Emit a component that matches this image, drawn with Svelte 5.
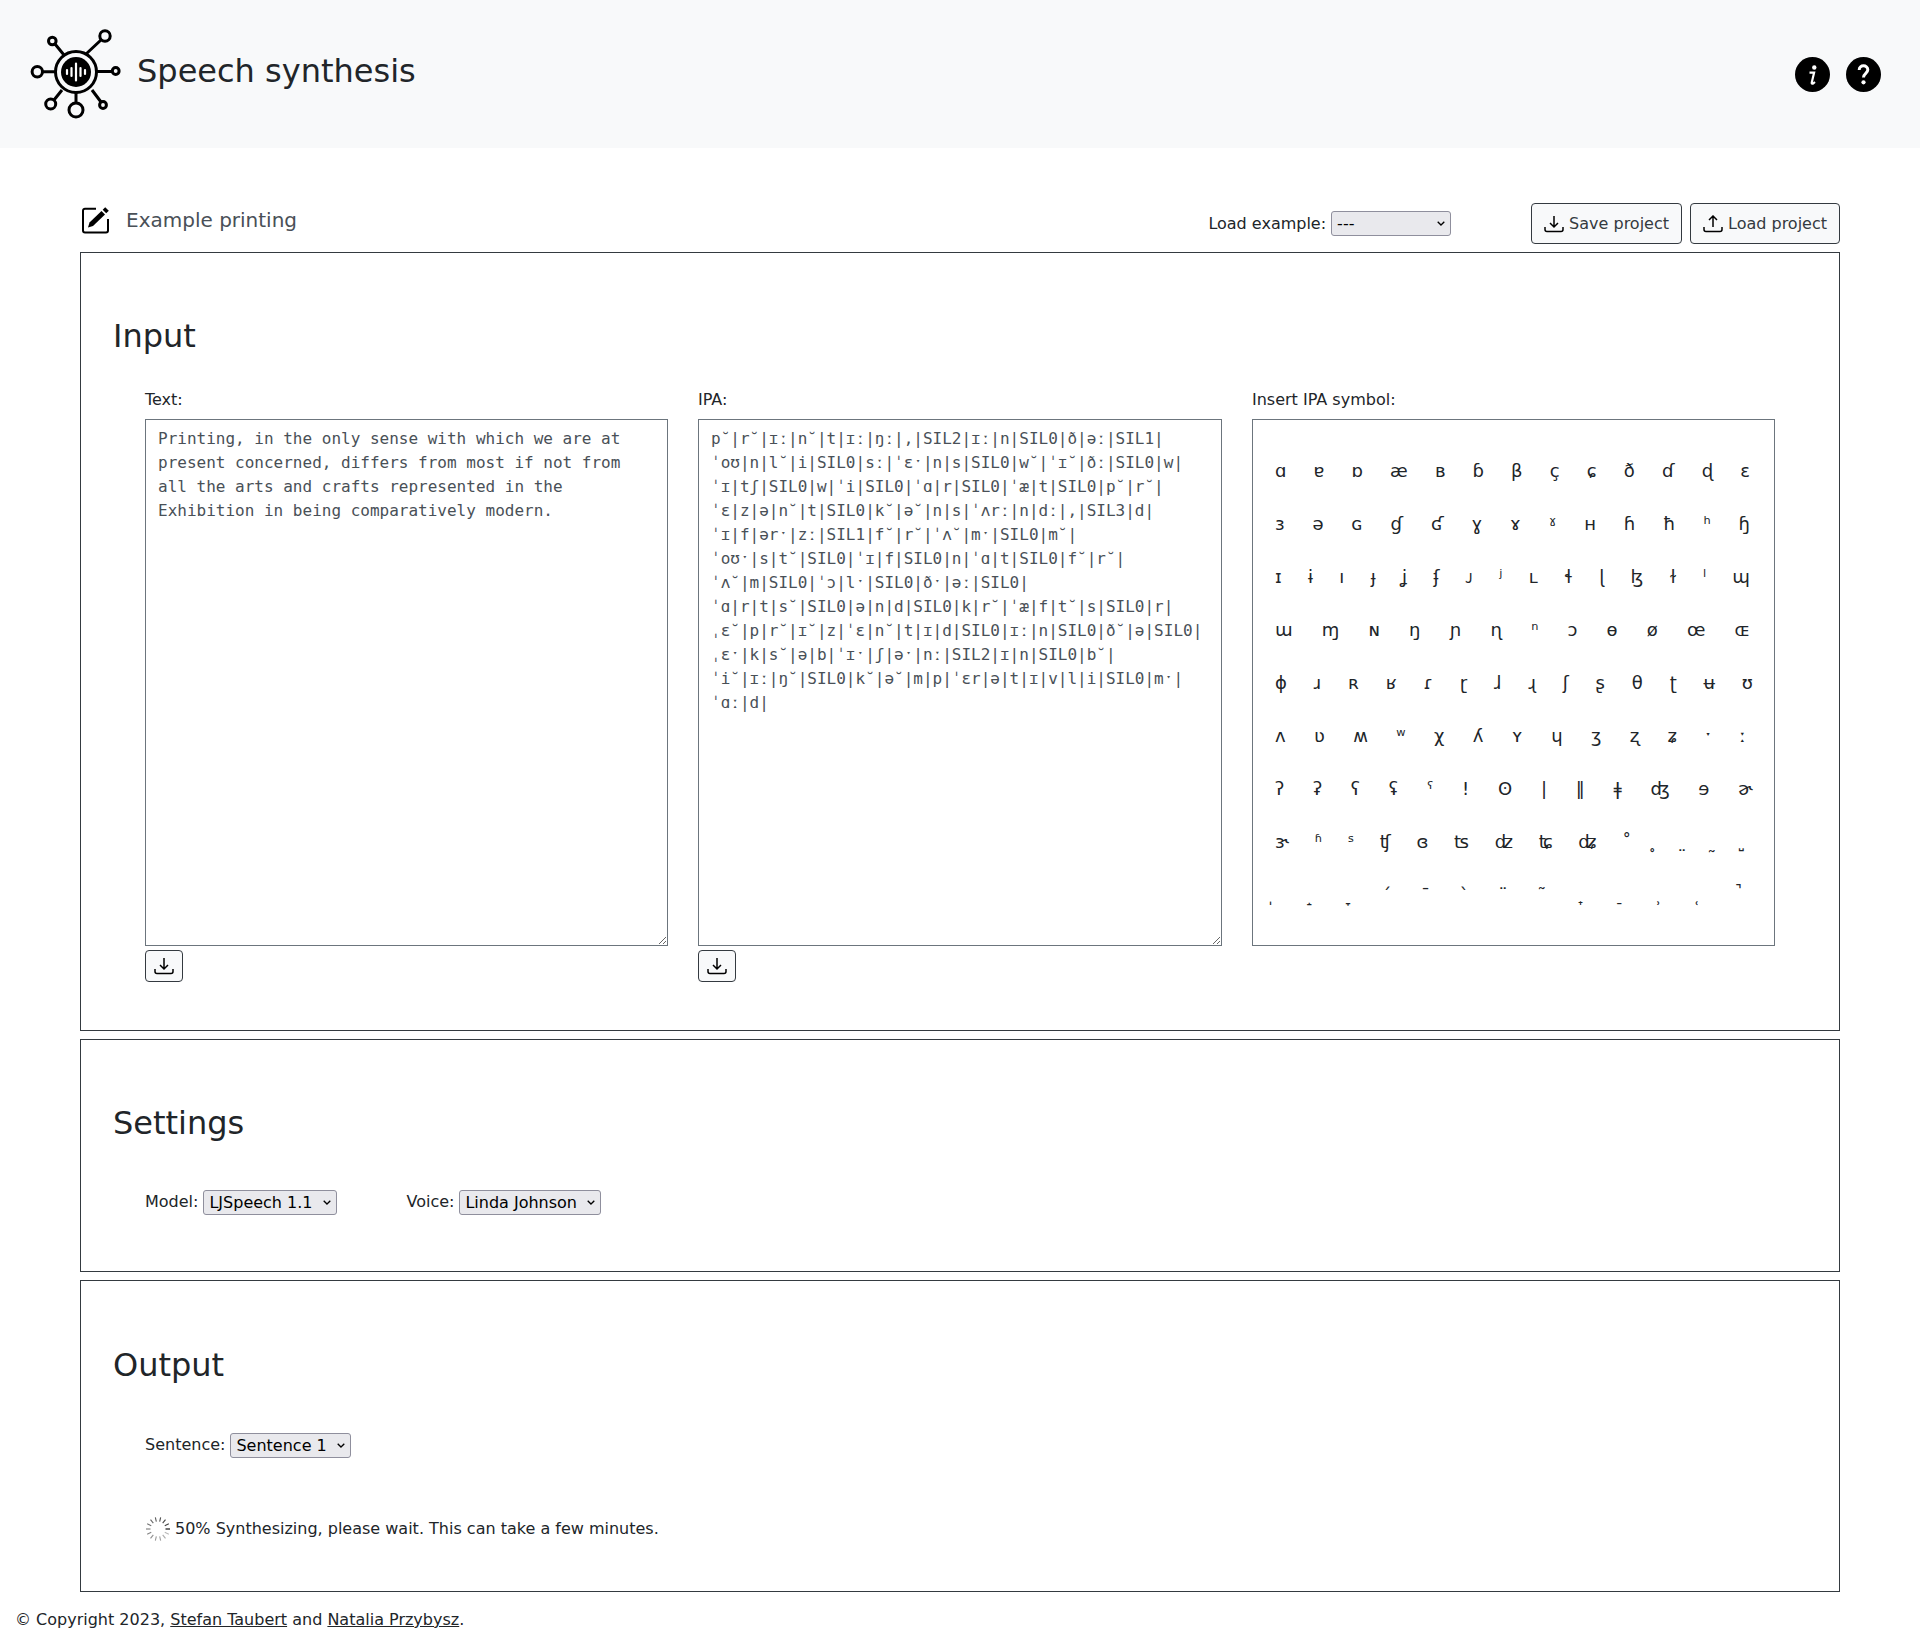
<script>
  const rows = [
    ["ɑ","ɐ","ɒ","æ","ʙ","ɓ","β","ç","ɕ","ð","ɗ","ɖ","ɛ"],
    ["ɜ","ə","ɢ","ɠ","ʛ","ɣ","ɤ","ˠ","ʜ","ɦ","ħ","ʰ","ɧ"],
    ["ɪ","ɨ","ı","ɟ","ʝ","ʄ","ᴊ","ʲ","ʟ","ɬ","ɭ","ɮ","ɫ","ˡ","ɰ"],
    ["ɯ","ɱ","ɴ","ŋ","ɲ","ɳ","ⁿ","ɔ","ɵ","ø","œ","ɶ"],
    ["ɸ","ɹ","ʀ","ʁ","ɾ","ɽ","ɺ","ɻ","ʃ","ʂ","θ","ʈ","ʉ","ʊ"],
    ["ʌ","ʋ","ʍ","ʷ","χ","ʎ","ʏ","ɥ","ʒ","ʐ","ʑ","ˑ","ː"],
    ["ʔ","ʡ","ʕ","ʢ","ˤ","!","ʘ","|","‖","ǂ","ʤ","ɘ","ɚ"],
    ["ɝ","ʱ","ˢ","ʧ","ɞ","ʦ","ʣ","ʨ","ʥ","˚","\u0325","\u0324","\u0330","\u033a"],
    ["\u0329","\u031d","\u031e","\u0301","\u0304","\u0300","\u0308","\u0303","\u031f","\u0320","\u0339","\u031c","\u031a"]
  ];
  const text = "Printing, in the only sense with which we are at present concerned, differs from most if not from all the arts and crafts represented in the Exhibition in being comparatively modern.";
  const ipa = [
    "p˘|r˘|ɪː|n˘|t|ɪː|ŋː|,|SIL2|ɪː|n|SIL0|ð|əː|SIL1|",
    "ˈoʊ|n|l˘|i|SIL0|sː|ˈɛˑ|n|s|SIL0|w˘|ˈɪ˘|ðː|SIL0|w|",
    "ˈɪ|tʃ|SIL0|w|ˈi|SIL0|ˈɑ|r|SIL0|ˈæ|t|SIL0|p˘|r˘|",
    "ˈɛ|z|ə|n˘|t|SIL0|k˘|ə˘|n|s|ˈʌrː|n|dː|,|SIL3|d|",
    "ˈɪ|f|ərˑ|zː|SIL1|f˘|r˘|ˈʌ˘|mˑ|SIL0|m˘|",
    "ˈoʊˑ|s|t˘|SIL0|ˈɪ|f|SIL0|n|ˈɑ|t|SIL0|f˘|r˘|",
    "ˈʌ˘|m|SIL0|ˈɔ|lˑ|SIL0|ðˑ|əː|SIL0|",
    "ˈɑ|r|t|s˘|SIL0|ə|n|d|SIL0|k|r˘|ˈæ|f|t˘|s|SIL0|r|",
    "ˌɛ˘|p|r˘|ɪ˘|z|ˈɛ|n˘|t|ɪ|d|SIL0|ɪː|n|SIL0|ð˘|ə|SIL0|",
    "ˌɛˑ|k|s˘|ə|b|ˈɪˑ|ʃ|əˑ|nː|SIL2|ɪ|n|SIL0|b˘|",
    "ˈi˘|ɪː|ŋ˘|SIL0|k˘|ə˘|m|p|ˈɛr|ə|t|ɪ|v|l|i|SIL0|mˑ|",
    "ˈɑː|d|"
  ].join("\n");
  const ticks = Array.from({ length: 14 }, (_, i) => i);
  const isMark = (s) => /^[\u0300-\u036f]$/.test(s);
</script>

{#snippet down()}
  <svg class="tray" viewBox="0 0 20 18" aria-hidden="true">
    <path d="M10 1v11M6 8l4 4 4-4M1 12v2.500a2 2 0 0 0 2 2h14a2 2 0 0 0 2-2V12" />
  </svg>
{/snippet}
{#snippet up()}
  <svg class="tray" viewBox="0 0 20 18" aria-hidden="true">
    <path d="M10 12V1M6 5l4-4 4 4M1 12v2.500a2 2 0 0 0 2 2h14a2 2 0 0 0 2-2V12" />
  </svg>
{/snippet}
{#snippet pick(label, cls = "")}
  <span class="pick">
    <select class={cls}><option>{label}</option></select>
    <svg class="chev" viewBox="0 0 8 5" aria-hidden="true"><path d="M.7.7 4 4 7.300.7" /></svg>
  </span>
{/snippet}

<header>
  <div class="brand">
    <svg class="logo" viewBox="0 0 94 94" aria-hidden="true">
      <g fill="none" stroke="#000" stroke-width="3">
        <circle cx="46" cy="46" r="20.500" />
        <circle cx="75" cy="10" r="5.200" />
        <circle cx="22.300" cy="15" r="3.800" />
        <circle cx="7.300" cy="45.700" r="5.200" />
        <circle cx="85.700" cy="45" r="3.400" />
        <circle cx="73" cy="79" r="3.400" />
        <circle cx="20.700" cy="78" r="5" />
        <circle cx="46" cy="84" r="7" />
        <path d="M56 28 71 14M25 18 34 29M12.500 45.700H25.500M67 45.500H82M62 64 71 76M32 64 24 74M46 66.500V77" />
      </g>
      <circle cx="46" cy="46" r="15" fill="#000" />
      <g stroke="#fff" stroke-width="2.200" stroke-linecap="round">
        <path d="M37 44v4M41.500 42v8M46 37.500v17M50.500 42v8M55 44v4" />
      </g>
    </svg>
    <h1>Speech synthesis</h1>
  </div>
  <div class="help">
    <svg class="round" viewBox="0 0 35 35" aria-hidden="true">
      <circle cx="17.500" cy="17.500" r="17.500" fill="#000" />
      <circle cx="19.300" cy="10.500" r="2.200" fill="#fff" />
      <path d="M14.500 15.700h4.600l-2.400 10c-.2 1 .9 1.100 1.600.6l1.700-1.300" fill="none" stroke="#fff" stroke-width="2.200" />
    </svg>
    <svg class="round" viewBox="0 0 35 35" aria-hidden="true">
      <circle cx="17.500" cy="17.500" r="17.500" fill="#000" />
      <path d="M13.200 13c0-5.500 8.600-5.500 8.600-.2 0 3.500-4.300 3.600-4.300 7.700" fill="none" stroke="#fff" stroke-width="3" />
      <circle cx="17.500" cy="25.300" r="2.100" fill="#fff" />
    </svg>
  </div>
</header>

<main>
  <div class="toolbar">
    <svg class="edit" viewBox="0 0 29 28" aria-hidden="true">
      <path d="M15 2.700H4a2 2 0 0 0-2 2V24.500a2 2 0 0 0 2 2H25a2 2 0 0 0 2-2V13" fill="none" stroke="#000" stroke-width="2" />
      <path d="M7 21.500 8.500 16.500 20.500 5 24 8.500 12 20Z" fill="#000" />
      <path d="M21.700 3.800 24.200 1.200 27.800 4.800 25.200 7.300Z" fill="#000" />
    </svg>
    <span class="doc">Example printing</span>
    <label class="field example">Load example: {@render pick("---", "wide")}</label>
    <button class="tool save">{@render down()}Save project</button>
    <button class="tool">{@render up()}Load project</button>
  </div>

  <section class="input">
    <h2>Input</h2>
    <div class="cols">
      <div>
        <div class="lab">Text:</div>
        <textarea readonly value={text}></textarea>
        <button class="mini" aria-label="Download text">{@render down()}</button>
      </div>
      <div>
        <div class="lab">IPA:</div>
        <textarea readonly value={ipa}></textarea>
        <button class="mini" aria-label="Download IPA">{@render down()}</button>
      </div>
      <div>
        <div class="lab">Insert IPA symbol:</div>
        <div class="symbols">
          {#each rows as row, r}
            <div class="symrow" class:last={r === 8}>
              {#each row as s}<span class:mark={r === 7 && isMark(s)}>{s}</span>{/each}
            </div>
          {/each}
        </div>
      </div>
    </div>
  </section>

  <section class="settings">
    <h2>Settings</h2>
    <div class="fields">
      <label class="field">Model: {@render pick("LJSpeech 1.1")}</label>
      <label class="field">Voice: {@render pick("Linda Johnson")}</label>
    </div>
  </section>

  <section class="output">
    <h2>Output</h2>
    <div class="fields">
      <label class="field">Sentence: {@render pick("Sentence 1")}</label>
    </div>
    <div class="progress">
      <svg class="spin" viewBox="-13 -13 26 26" aria-hidden="true">
        {#each ticks as t}
          <line x1="7.500" y1="0" x2="12" y2="0" transform={`rotate(${t * (360 / 14)})`} stroke="#000" stroke-width="1.100" stroke-opacity={t === 0 ? 1 : 0.25 + (t / 14) * 0.55} />
        {/each}
      </svg>
      <span>50% Synthesizing, please wait. This can take a few minutes.</span>
    </div>
  </section>
</main>

<footer>© Copyright 2023, <a href="#s">Stefan Taubert</a> and <a href="#n">Natalia Przybysz</a>.</footer>

<style>
  :global(body) {
    margin: 0;
    font-family: "DejaVu Sans", sans-serif;
    font-size: 16px;
    line-height: 1.5;
    color: #212529;
    background: #fff;
  }
  header {
    height: 148px;
    background: #f8f9fa;
    display: flex;
    align-items: center;
    justify-content: space-between;
    padding: 0 39px 0 30px;
  }
  .brand { display: flex; align-items: center; gap: 15px; }
  .logo { width: 94px; height: 94px; flex: none; margin-bottom: 2px; margin-right: -2px; }
  h1 { font-size: 32px; font-weight: 400; line-height: 1.2; margin: -6px 0 0; }
  .help { display: flex; gap: 16px; }
  .round { width: 35px; height: 35px; display: block; }
  main { padding: 55px 80px 0; }
  .toolbar { display: flex; align-items: center; height: 41px; margin-bottom: 8px; }
  .edit { width: 29px; height: 28px; margin-left: 1px; flex: none; margin-bottom: 8px; }
  .doc { font-size: 20px; color: #495057; margin-left: 16px; margin-bottom: 7px; }
  .example { margin-left: auto; margin-right: 80px; }
  .field { display: inline-flex; align-items: center; gap: 5px; }
  .pick { position: relative; display: inline-flex; }
  select {
    appearance: none;
    height: 25px;
    box-sizing: border-box;
    padding: 0 23px 0 5px;
    border: 1px solid #8f8f9d;
    border-radius: 3px;
    background: #e9e9ed;
    color: #000;
    font: 16px "DejaVu Sans", sans-serif;
  }
  .wide { width: 120px; }
  .chev { position: absolute; right: 6px; top: 10px; width: 8px; height: 5px; pointer-events: none; }
  .chev path { fill: none; stroke: #000; stroke-width: 1.300; }
  .tool {
    display: flex;
    align-items: center;
    gap: 5px;
    height: 41px;
    padding: 0 12px;
    box-sizing: border-box;
    font: 16px/1.5 "DejaVu Sans", sans-serif;
    color: #343a40;
    background: #f8f9fa;
    border: 1px solid #343a40;
    border-radius: 4px;
  }
  .save { margin-right: 8px; }
  .tray { width: 20px; height: 18px; display: block; flex: none; }
  .tray path { fill: none; stroke: #000; stroke-width: 1.500; }
  section {
    border: 1px solid #343a40;
    padding: 64px 32px 0;
    margin-bottom: 8px;
    box-sizing: border-box;
  }
  h2 { font-size: 32px; font-weight: 400; line-height: 1.2; margin: 0 0 33px; }
  .input { height: 779px; }
  .settings { height: 233px; }
  .output { height: 312px; padding-top: 65px; }
  .cols {
    display: grid;
    grid-template-columns: 523px 524px 523px;
    gap: 30px;
    margin-left: 32px;
  }
  .lab { line-height: 24px; margin-bottom: 6.600px; }
  textarea {
    display: block;
    width: 100%;
    height: 527px;
    box-sizing: border-box;
    padding: 7px 12px;
    border: 1px solid #6c757d;
    border-radius: 0;
    font: 16px/24px "DejaVu Sans Mono", monospace;
    color: #495057;
    outline: none;
  }
  .mini {
    display: flex;
    align-items: center;
    justify-content: center;
    width: 38px;
    height: 32px;
    margin-top: 4px;
    padding: 0;
    background: #f8f9fa;
    border: 1px solid #343a40;
    border-radius: 4px;
  }
  .symbols {
    height: 527px;
    box-sizing: border-box;
    border: 1px solid #6c757d;
    padding: 24px 24px 0 22px;
    overflow: hidden;
    font-size: 18px;
  }
  .symrow {
    display: flex;
    justify-content: space-between;
    height: 53px;
    align-items: center;
  }
  .symrow span { min-width: 1px; }
  .symrow .mark { min-width: 4px; }
  .symrow:nth-child(5) { margin-right: -3px; }
  .symrow:nth-child(6) { padding-right: 4px; }
  .symrow:nth-child(7) { margin-right: -3px; }
  .last { padding-right: 9px; }
  .fields { display: flex; gap: 69px; margin-left: 32px; }
  .settings h2 { margin-bottom: 47.600px; }
  .output h2 { margin-bottom: 48.600px; }
  .progress { display: flex; align-items: center; gap: 4px; margin: 58px 0 0 32px; }
  .spin { width: 26px; height: 26px; flex: none; }
  footer { padding: 8px 15px 7px; line-height: 24px; }
  a { color: inherit; }
</style>
